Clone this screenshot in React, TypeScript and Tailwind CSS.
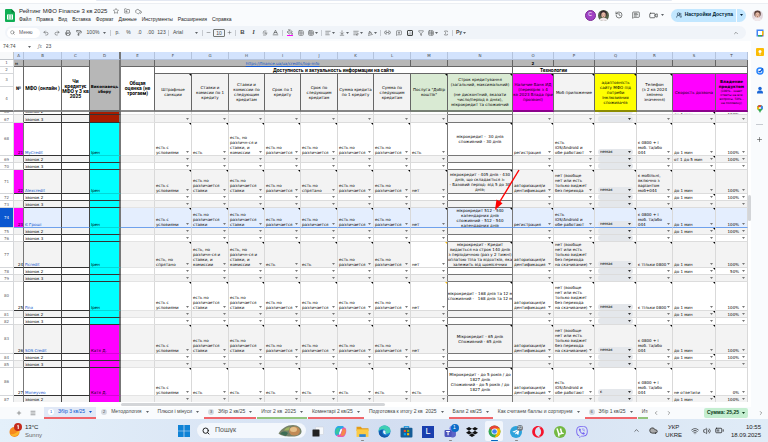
import type { ReactNode } from "react";
import clsx from "clsx";
import {
  AlignLeft,
  ArrowDownToLine,
  Baseline,
  BatteryMedium,
  ChartNoAxesColumn,
  ChevronLeft,
  ChevronRight,
  ChevronUp,
  Cloud,
  CloudCheck,
  Filter,
  FolderInput,
  Grid2x2,
  History,
  Link2,
  Menu,
  MessageSquarePlus,
  MessageSquareText,
  Minus,
  PaintBucket,
  PaintRoller,
  Plus,
  Printer,
  Redo2,
  Search,
  Sigma,
  Star,
  Strikethrough,
  TableCellsMerge,
  TableProperties,
  Undo2,
  UsersRound,
  Video,
  Volume2,
  Wifi,
  WrapText,
} from "lucide-react";
import { FaDropbox, FaOpera, FaTelegramPlane, FaViber } from "react-icons/fa";

type Row = {
  n: number;
  h: string;
  inner: string;
  gray?: boolean;
  selected?: boolean;
  main?: boolean;
  no?: string;
  noPink?: boolean;
  name: string;
  who?: string;
  whoBg: string;
  cells: string[];
};

const DIFF = "есть но\nразличается";
const DIFF_RATE = "есть но\nразличается\nставки";
const DIFF_FEE = "есть, но\nразличн-ся и\nставки, и\nкомиссии";
const COND = "есть с\nусловиями";
const AUTH = "авторизация/и\nдентификация";
const WIDGET = "нет (вообще\nнет или есть\nтолько виджет\nбез перехода\nна скачивание)";
const APPS = "есть\niOS/Android и\nобе работают";
const PHONE = "є 0800 + і\nмоб. та/або\n044";

// F..T, fifteen values for each call
const blank = (speed = "", share = "") => ["", "", "", "", "", "", "", "", "", "", "", "", "", speed, share];

const CYAN = "bg-[#00ffff]";
const PINK = "bg-[#ff00ff]";
const RED = "bg-[#a61c00]";

const sub = (n: number, call: 2 | 3, whoBg: string, gray: boolean, speed?: string, share?: string): Row => ({
  n,
  h: "h-[7px]",
  inner: "h-[6px]",
  gray,
  name: `звонок ${call}`,
  whoBg,
  cells: blank(speed, share),
});

const rows: Row[] = [
  { ...sub(66, 2, RED, false, "до 1 мин", "100%"), h: "h-[3px]", inner: "h-[2px]" },
  { ...sub(67, 3, RED, true), h: "h-[8px]", inner: "h-[7px]" },
  {
    n: 68, h: "h-[33px]", inner: "h-[32px]", main: true, no: "21", noPink: true, name: "MyCredit", who: "Ірен", whoBg: CYAN,
    cells: [COND, "есть", DIFF_FEE, DIFF, DIFF, DIFF, DIFF, "есть", "мікрокредит -  30 днів\nспоживний - 30 днів", "регистрация", APPS, "немає", PHONE, "до 1 мин", "100%"],
  },
  sub(69, 2, CYAN, true, "от 1 до 5 мин", "100%"),
  sub(70, 3, CYAN, false),
  {
    n: 71, h: "h-[24px]", inner: "h-[23px]", main: true, gray: true, no: "22", noPink: true, name: "Alexcredit", who: "Ірен", whoBg: CYAN,
    cells: [COND, DIFF_RATE, DIFF_RATE, DIFF, "есть но\nспрятано", DIFF, DIFF, "нет", "мікрокредит - 405 днів - 430\nднів, що складається з:\n- Базовий період: від 5 до 30\nднів;", AUTH, "нет (вообще\nнет или есть\nтолько виджет\nбез перехода", "немає", "є мобільні,\nвключно з\nваріантом\nмоб+044", "до 1 мин", "100%"],
  },
  sub(72, 2, CYAN, false, "до 1 мин", "100%"),
  sub(73, 3, CYAN, true),
  {
    n: 74, h: "h-[20px]", inner: "h-[19px]", main: true, selected: true, no: "23", noPink: true, name: "Є Гроші", who: "Ірен", whoBg: CYAN,
    cells: [COND, DIFF_RATE, DIFF_RATE, DIFF, DIFF, DIFF, DIFF, "нет", "мікрокредит 512 - 540\nкалендарних днів\nспоживний - 512 - 540\nкалендарних днів", "регистрация", APPS, "немає", PHONE, "до 1 мин", "100%"],
  },
  sub(75, 2, CYAN, true, "до 1 мин", "100%"),
  sub(76, 3, CYAN, false),
  {
    n: 77, h: "h-[26px]", inner: "h-[25px]", main: true, gray: true, no: "24", name: "Ficredit", who: "Ірен", whoBg: CYAN,
    cells: ["есть, но\nспрятано", DIFF_FEE, DIFF_FEE, "есть", "есть", DIFF, DIFF, "нет", "мікрокредит - Кредит\nвидається на строк 140 днів\nз періодичною (раз у 2 тижні)\nоплатою тіла та відсотків, яка\nзалежить від щомісячних", AUTH, WIDGET, "немає", "є тільки 0800", "до 1 мин", "100%"],
  },
  sub(78, 2, CYAN, false, "до 1 мин", "50%"),
  sub(79, 3, CYAN, true),
  {
    n: 80, h: "h-[29px]", inner: "h-[28px]", main: true, no: "25", name: "Finx", who: "Ірен", whoBg: CYAN,
    cells: [COND, DIFF_RATE, DIFF_RATE, DIFF, DIFF, DIFF, DIFF, "нет", "мікрокредит - 168 днів та 12 м\nспоживний -   168 днів та 12 м", AUTH, WIDGET, "немає", "є тільки 0800", "до 1 мин", "100%"],
  },
  sub(81, 2, CYAN, true, "до 1 мин", "100%"),
  sub(82, 3, CYAN, false),
  {
    n: 83, h: "h-[29px]", inner: "h-[28px]", main: true, gray: true, no: "26", name: "SOS Credit", who: "Катя Д.", whoBg: PINK,
    cells: [COND, DIFF_RATE, DIFF_RATE, DIFF, DIFF, DIFF, DIFF, "нет", "Мікрокредит - 65 днів\nСпоживний - 65 днів", AUTH, WIDGET, "немає", PHONE, "до 1 мин", "100%"],
  },
  sub(84, 2, PINK, false, "до 1 мин", "100%"),
  sub(85, 3, PINK, true),
  {
    n: 86, h: "h-[28px]", inner: "h-[27px]", main: true, no: "27", name: "Moneyveo", who: "Катя Д.", whoBg: PINK,
    cells: [COND, "есть", "есть", "есть", "есть", "есть", "есть", "есть", "Мікрокредит - до 5 років / до\n1827 днів\nСпоживний - до 5 років / до\n1827 днів", AUTH, APPS, "є", PHONE, "не ответили", "0%"],
  },
  sub(87, 2, PINK, true, "до 1 мин", "100%"),
];

const columns: [string, string][] = [
  ["A", "w-[10px]"], ["B", "w-[38px]"], ["C", "w-[28px]"], ["D", "w-[31px]"], ["E", "w-[34px]"],
  ["F", "w-[37px]"], ["G", "w-[37px]"], ["H", "w-[36px]"], ["I", "w-[36px]"], ["J", "w-[37px]"],
  ["K", "w-[36px]"], ["L", "w-[37px]"], ["M", "w-[37px]"], ["N", "w-[65px]"], ["O", "w-[41px]"],
  ["P", "w-[41px]"], ["Q", "w-[42px]"], ["R", "w-[36px]"], ["S", "w-[43px]"], ["T", "w-[32px]"],
];

const headings: { text: string; bg: string; small?: string }[] = [
  { text: "Штрафные\nсанкции", bg: "bg-[#f3f3f3]" },
  { text: "Ставки и\nкомисии по 1\nкредиту", bg: "bg-[#f3f3f3]" },
  { text: "Ставки и\nкомиссии по\nследующим\nкредитам", bg: "bg-[#f3f3f3]" },
  { text: "Срок по 1\nкредиту", bg: "bg-[#f3f3f3]" },
  { text: "Срок по\nследующим\nкредитам", bg: "bg-[#f3f3f3]" },
  { text: "Сумма кредита\nпо 1 кредиту", bg: "bg-[#f3f3f3]" },
  { text: "Сумма по\nследующим\nкредитам", bg: "bg-[#f3f3f3]" },
  { text: "Послуга \"Добір\nкоштів\"", bg: "bg-[#d9ead3]" },
  { text: "Строк кредитування\n(загальний, максимальний)\n\n(не дисконтний, вказати\nчисло/період в днях),\nмікрокредит та споживчий", bg: "bg-[#d9ead3]" },
  { text: "Наличие Банк ИД\n(перевіряє з 4\nкв 2023 Влада при\nпрозвоні)", bg: PINK },
  { text: "Моб приложение", bg: "bg-[#f3f3f3]" },
  { text: "адаптовність\nсайту МФО під\nпотреби\nінклюзивних\nспоживачів", bg: "bg-[#ffff00]" },
  { text: "Телефон\n(з 2 кв 2024\nзмінено\nзначення)", bg: "bg-[#f3f3f3]" },
  { text: "Скорость дозвона", bg: PINK },
  { text: "Владение\nпродуктом", bg: PINK, small: "(100% - знает\nответы на все\nвопросы, 50% -\nна половину)" },
];

function Caret({ className = "text-[#5f6368]" }: { className?: string }) {
  return (
    <svg viewBox="0 0 6 4" className={clsx("h-[2px] w-[3px] shrink-0", className)} fill="currentColor">
      <path d="M0 0h6L3 4z" />
    </svg>
  );
}

function Corner({ className = "text-black" }: { className?: string }) {
  return (
    <svg viewBox="0 0 4 4" className={clsx("absolute top-0 right-0 size-[2px]", className)} fill="currentColor">
      <path d="M0 0h4v4z" />
    </svg>
  );
}

function Tool({ label, children, wide }: { label: string; children: ReactNode; wide?: boolean }) {
  return (
    <button
      aria-label={label}
      className={clsx("flex h-full shrink-0 items-center justify-center", wide ? "w-[14px] gap-px" : "w-[11px]")}
    >
      {children}
      {wide && <Caret />}
    </button>
  );
}

function Divider() {
  return <span className="mx-px h-[6px] w-px shrink-0 bg-[#c7cbd1]" />;
}

function SheetsLogo() {
  return (
    <svg viewBox="0 0 20 26" className="h-[13px] w-[10px] shrink-0">
      <path d="M2 0h11l7 7v17a2 2 0 0 1-2 2H2a2 2 0 0 1-2-2V2a2 2 0 0 1 2-2z" fill="#0fae54" />
      <path d="M13 0l7 7h-7z" fill="#087a39" />
      <path d="M4 11h12v10H4zM6 13v2h3v-2zm5 0v2h3v-2zm-5 4v2h3v-2zm5 0v2h3v-2z" fill="#fff" fillRule="evenodd" />
    </svg>
  );
}

function Portrait({ hair, coat }: { hair: string; coat: string }) {
  return (
    <svg viewBox="0 0 20 20" className="size-[11px] shrink-0 rounded-full">
      <rect width="20" height="20" fill={coat} />
      <ellipse cx="10" cy="7" rx="6" ry="6" fill={hair} />
      <ellipse cx="10" cy="9" rx="4" ry="5" fill="#e5b9a4" />
      <path d="M3 20c0-5 3-6 7-6s7 1 7 6z" fill="#f0e8ea" />
      <path d="M8 9h1M11 9h1M9 12h2" stroke="#6d4037" />
    </svg>
  );
}

function AppHeader() {
  const menu = ["Файл", "Правка", "Вид", "Вставка", "Формат", "Данные", "Инструменты", "Расширения", "Справка"];
  return (
    <header className="flex h-[22px] shrink-0 items-center pr-[5px] pl-[5px] text-[#444746]">
      <SheetsLogo />
      <div className="ml-1 flex flex-col">
        <div className="flex h-2 items-center gap-[5px]">
          <h1 className="text-[6px] leading-[8px] text-[#1f1f1f]">Рейтинг МФО Finance 3 кв 2025</h1>
          <Star className="ml-px size-[6px]" />
          <FolderInput className="size-[6px]" />
          <CloudCheck className="size-[7px]" />
        </div>
        <nav className="flex h-2 items-center gap-[5px] text-[5px] leading-[8px] text-[#1f1f1f]">
          {menu.map((item) => (
            <button key={item}>{item}</button>
          ))}
        </nav>
      </div>
      <div className="ml-auto flex items-center">
        <span className="flex size-[11px] items-center justify-center rounded-full border border-[#7b2c94] bg-[#a142c4] text-[5px] text-white">С</span>
        <span className="ml-[2px] flex rounded-full">
          <Portrait hair="#33272c" coat="#55624a" />
        </span>
        <button aria-label="История версий" className="ml-[6px]"><History className="size-[8px]" /></button>
        <button aria-label="Комментарии" className="ml-[9px]"><MessageSquareText className="size-[8px]" /></button>
        <button aria-label="Видеовстреча" className="ml-[9px] flex items-center gap-[3px]">
          <Video className="size-[9px]" />
          <Caret />
        </button>
        <div className="ml-[7px] flex h-[13px] items-center overflow-hidden rounded-full bg-[#c2e7ff] text-[#001d35]">
          <button className="flex h-full items-center gap-[3px] pr-[3px] pl-[5px] text-[5px] font-bold">
            <UsersRound className="size-[6px]" />
            Настройки Доступа
          </button>
          <button aria-label="Параметры доступа" className="flex h-full w-[10px] items-center justify-center border-l border-[#f9fbfd]">
            <Caret className="text-[#001d35]" />
          </button>
        </div>
        <span className="ml-[6px] flex">
          <Portrait hair="#5b4038" coat="#e2d6dc" />
        </span>
      </div>
    </header>
  );
}

function Toolbar() {
  return (
    <div className="mx-[5px] flex h-[13px] shrink-0 items-center rounded-full bg-[#f0f4f9] pl-[2px] text-[5px] text-[#444746]">
      <label className="flex h-[10px] w-[33px] shrink-0 items-center gap-[4px] rounded-full bg-white pl-[3px]">
        <Search className="size-[5px] shrink-0" />
        <input aria-label="Меню" placeholder="Меню" className="w-full bg-transparent outline-none placeholder:text-[#5f6368]" />
      </label>
      <Tool label="Отменить"><Undo2 className="size-[6px]" /></Tool>
      <Tool label="Повторить"><Redo2 className="size-[6px]" /></Tool>
      <Tool label="Печать"><Printer className="size-[6px]" /></Tool>
      <Tool label="Копировать форматирование"><PaintRoller className="size-[6px]" /></Tool>
      <button className="flex w-[25px] shrink-0 items-center justify-center gap-[4px]">
        100% <Caret />
      </button>
      <Divider />
      <Tool label="Денежный формат">р.</Tool>
      <Tool label="Процентный формат">%</Tool>
      <Tool label="Меньше знаков">.0</Tool>
      <Tool label="Больше знаков">.00</Tool>
      <Tool label="Другие форматы">123</Tool>
      <Divider />
      <button className="flex w-[31px] shrink-0 items-center justify-between px-[3px]">
        Arial <Caret />
      </button>
      <Divider />
      <button aria-label="Уменьшить" className="w-[9px] shrink-0"><Minus className="mx-auto size-[5px]" /></button>
      <input aria-label="Размер шрифта" defaultValue="10" className="h-[8px] w-[12px] shrink-0 rounded-[1px] border border-[#747775] bg-transparent text-center leading-[6px]" />
      <button aria-label="Увеличить" className="w-[9px] shrink-0"><Plus className="mx-auto size-[5px]" /></button>
      <Divider />
      <Tool label="Полужирный"><b className="text-[6px]">B</b></Tool>
      <Tool label="Курсив"><i className="font-serif text-[6px] font-bold">I</i></Tool>
      <Tool label="Зачеркнутый"><Strikethrough className="size-[6px]" /></Tool>
      <Tool label="Цвет текста"><Baseline className="size-[7px]" /></Tool>
      <Divider />
      <Tool label="Цвет заливки">
        <span className="flex flex-col border-b border-[#ff00ff]"><PaintBucket className="size-[6px]" /></span>
      </Tool>
      <Tool label="Границы"><Grid2x2 className="size-[6px]" /></Tool>
      <Tool label="Объединить ячейки" wide><TableCellsMerge className="size-[6px]" /></Tool>
      <Divider />
      <Tool label="Горизонтальное выравнивание" wide><AlignLeft className="size-[6px]" /></Tool>
      <Tool label="Вертикальное выравнивание" wide><ArrowDownToLine className="size-[6px]" /></Tool>
      <Tool label="Перенос текста" wide><WrapText className="size-[6px]" /></Tool>
      <Tool label="Поворот текста" wide><Baseline className="size-[6px] -rotate-12" /></Tool>
      <Divider />
      <Tool label="Ссылка"><Link2 className="size-[7px]" /></Tool>
      <Tool label="Комментарий"><MessageSquarePlus className="size-[6px]" /></Tool>
      <Tool label="Диаграмма"><ChartNoAxesColumn className="size-[6px] rounded-[1px] border border-current" /></Tool>
      <Tool label="Фильтр"><Filter className="size-[6px]" /></Tool>
      <Tool label="Режим фильтрации" wide><TableProperties className="size-[6px]" /></Tool>
      <Tool label="Функции"><Sigma className="size-[6px]" /></Tool>
      <Divider />
      <Tool label="Способ ввода" wide><b>Ру</b></Tool>
      <button aria-label="Скрыть меню" className="mr-[7px] ml-auto"><ChevronUp className="size-[6px]" /></button>
    </div>
  );
}

function FormulaBar() {
  return (
    <div className="mt-[2px] flex h-[11px] shrink-0 items-center bg-white text-[5px] text-[#444746]">
      <button className="flex w-[33px] items-center justify-between pr-[2px] pl-[3px]">
        74:74 <Caret />
      </button>
      <label className="flex flex-1 items-center pl-[5px]">
        <i className="font-serif text-[#80868b]">fx</i>
        <input aria-label="Формула" defaultValue="23" className="ml-[4px] flex-1 bg-transparent outline-none" />
      </label>
    </div>
  );
}

function RowHead({ children, selected, className }: { children: ReactNode; selected?: boolean; className?: string }) {
  return (
    <th
      scope="row"
      className={clsx(
        "border-r border-b border-[#d5d7da] p-0 text-center leading-[4px] font-normal",
        selected ? "bg-[#0b57d0] text-white" : "bg-white text-[#5f6368]",
        className
      )}
    >
      {children}
    </th>
  );
}

function SheetHead() {
  const gray = "border-r border-b border-[#666] bg-[#b7b7b7] p-0";
  const bold = "font-[Roboto,Arial,sans-serif] text-[5px] font-bold";
  const tall = clsx("border-r border-b-2 border-r-[#666] border-b-black/45 bg-white p-0 text-center align-middle whitespace-pre", bold);
  const merged = clsx("border-r border-b border-[#666] bg-white p-0 text-center", bold);
  return (
    <thead>
      <tr className="h-[8px] bg-[#d3e3fd] leading-[4px] text-[#444746]">
        <th className="border-r border-b border-[#c0c4c9] bg-[#f8f9fa] p-0" />
        {columns.map(([letter]) => (
          <th
            key={letter}
            scope="col"
            className={clsx(
              "border-b border-[#b4c3dc] p-0 text-center font-medium",
              letter === "D" ? "border-r-2 border-r-[#777]" : "border-r"
            )}
          >
            {letter}
          </th>
        ))}
      </tr>
      <tr className="h-[7px] leading-[5px]">
        <RowHead>1</RowHead>
        <td className={gray}><div className="pl-px">м</div></td>
        <td className={gray} />
        <td className={gray} />
        <td className="border-r-2 border-r-[#777] bg-[#b7b7b7] p-0" />
        <td className={gray} />
        <td colSpan={7} className={clsx(gray, "text-center")}>
          <a href="https://finance.ua/ua/credits/top-mfo" className="text-[#1155cc] underline">
            https://finance.ua/ua/credits/top-mfo
          </a>
        </td>
        <td className={gray} />
        <td className={gray} />
        <td className={clsx(gray, "text-center font-bold")}>2</td>
        <td className={gray} />
        <td className={gray} />
        <td className={gray} />
        <td className={gray} />
        <td className={gray} />
      </tr>
      <tr className="h-[7px] leading-[5px]">
        <RowHead>2</RowHead>
        <th rowSpan={3} className={tall}>№</th>
        <th rowSpan={3} className={tall}>МФО (онлайн )</th>
        <th rowSpan={3} className={tall}>{"Чи\nкредитує\nМФО у 3 кв\n2025"}</th>
        <th rowSpan={3} className="border-r-2 border-b-2 border-r-[#777] border-b-black/45 bg-[#b7b7b7] p-0 text-center font-bold whitespace-pre">
          {"Виконавець\nзбору"}
        </th>
        <th rowSpan={3} className={tall}>{"Общая\nоценка (не\nтрогаем)"}</th>
        <th colSpan={9} className={merged}>Доступность и актуальность информации на сайте</th>
        <th colSpan={2} className={merged}>Технологии</th>
        <th className={merged} />
        <th colSpan={3} className={merged} />
      </tr>
      <tr className="h-[13px] leading-[5px]">
        <RowHead>3</RowHead>
        {headings.map((item, i) => (
          <th
            key={item.text}
            rowSpan={2}
            scope="col"
            className={clsx(
              "relative border-r border-b-2 border-r-[#666] border-b-black/45 p-0 text-center align-middle whitespace-pre",
              item.small ? "font-bold" : "font-medium",
              item.bg
            )}
          >
            {item.text}
            {item.small && <span className="block text-[3px] leading-[4px] font-medium">{item.small}</span>}
            {(i === 0 || i > 6) && i < 13 && <Corner />}
          </th>
        ))}
      </tr>
      <tr className="h-[25px]">
        <RowHead className="border-b-2 border-b-[#777]">4</RowHead>
      </tr>
    </thead>
  );
}

function PointerArrow() {
  return (
    <svg viewBox="0 0 26 41" className="pointer-events-none absolute -top-[39px] left-[46px] z-10 h-[41px] w-[26px]">
      <path d="M25 1L5 34" stroke="#f00" strokeWidth="1.4" />
      <path d="M1 41l1.500-10.500 6 3.700z" fill="#f00" />
    </svg>
  );
}

function ValueCell({ row, index }: { row: Row; index: number }) {
  const value = row.cells[index];
  const col = columns[index + 5][0];
  const yellow = (row.n === 77 || row.n === 80) && col === "M";
  const corner = yellow ? "text-[#fbbc04]" : "text-black";
  const hasCorner = (row.main && col !== "T") || (col === "S" && value !== "");
  const line = row.selected ? "border-b-[#6fa1ec]" : col === "N" ? "border-b-[#777]" : "border-b-[#dcdcdc]";
  const side = col === "N" || col === "M" ? "border-r-[#777]" : "border-r-[#d9d9d9]";

  return (
    <td className={clsx("relative border-r border-b p-0", line, side, row.n === 77 && col === "M" && "bg-white")}>
      {hasCorner && <Corner className={corner} />}
      {col === "N" ? (
        <div className={clsx("flex items-center justify-center overflow-hidden", row.inner)}>
          <p className="max-h-full text-center whitespace-pre">{value}</p>
        </div>
      ) : col === "Q" ? (
        <div className={clsx("flex items-end overflow-hidden px-[3px]", row.inner)}>
          <label className="flex h-[6px] w-full items-center justify-between rounded-full bg-[#e4e7eb] px-[2px]">
            <select aria-label={`Адаптивность, строка ${row.n}`} defaultValue={value} className="h-[6px] flex-1 appearance-none bg-transparent leading-[6px]">
              <option value={value}>{value}</option>
              <option value="інше">інше</option>
            </select>
            <Caret className="text-[#333]" />
          </label>
        </div>
      ) : (
        <div className={clsx("flex items-end justify-between overflow-hidden pr-[2px] pl-px", row.inner)}>
          <p className={clsx("max-h-full min-w-0 flex-1 whitespace-pre", col === "T" && "pr-[3px] text-right")}>{value}</p>
          <button aria-label={`Список ${col}${row.n}`} className="mb-[2px] flex shrink-0">
            <Caret className="text-[#777]" />
          </button>
        </div>
      )}
      {row.selected && col === "N" && <PointerArrow />}
    </td>
  );
}

function SheetRow({ row }: { row: Row }) {
  const line = row.selected ? "border-b-[#6fa1ec]" : "border-b-[#333]";
  return (
    <tr
      className={clsx(row.h, "leading-[5px]", row.selected ? "bg-[#e4eefe]" : row.gray ? "bg-[#f3f3f3]" : "bg-white")}
    >
      <RowHead selected={row.selected}>
        <div className={clsx("flex justify-center overflow-hidden", row.main ? "items-center" : "items-end", row.inner)}>{row.n}</div>
      </RowHead>
      <td className={clsx("border-r border-b border-r-[#777] p-0", row.main ? line : "border-b-[#dcdcdc]", row.noPink && "bg-[#ff00ff]")}>
        <div className={clsx("flex items-end justify-end overflow-hidden", row.inner)}>{row.no}</div>
      </td>
      <td className={clsx("border-r border-b border-r-[#444] p-0", line)}>
        <div className={clsx("flex items-end overflow-hidden pl-px whitespace-pre", row.inner)}>
          {row.main ? <a href="#site" className="text-[#1155cc] underline">{row.name}</a> : row.name}
        </div>
      </td>
      <td className={clsx("border-r border-b border-r-[#444] p-0", line)} />
      <td className={clsx("border-r-2 border-b border-r-[#777] p-0", row.main ? "border-b-black/15" : line, row.whoBg)}>
        <div className={clsx("flex items-end overflow-hidden pl-px", row.inner)}>{row.who}</div>
      </td>
      <td className={clsx("border-r border-b border-r-[#d9d9d9] p-0", row.selected ? line : "border-b-[#e4e4e4]")} />
      {row.cells.map((_, i) => (
        <ValueCell key={i} row={row} index={i} />
      ))}
    </tr>
  );
}

function Sheet() {
  return (
    <div className="flex min-h-0 flex-1 flex-col bg-white">
      <div className="flex min-h-0 flex-1">
        <div className="min-w-0 flex-1 overflow-hidden">
          <table className="w-full table-fixed border-separate border-spacing-0 font-['DejaVu_Sans',Arial,sans-serif] text-[4px] text-black">
            <colgroup>
              <col className="w-[14px]" />
              {columns.map(([letter, width]) => (
                <col key={letter} className={width} />
              ))}
            </colgroup>
            <SheetHead />
            <tbody>
              {rows.map((row) => (
                <SheetRow key={row.n} row={row} />
              ))}
            </tbody>
          </table>
        </div>
        <div className="flex w-[3px] shrink-0 flex-col pt-[143px]">
          <span className="h-[26px] rounded-full bg-[#d3d5d8]" />
        </div>
      </div>
      <div className="flex h-[5px] shrink-0 items-center pl-[121px]">
        <span className="h-[3px] w-[264px] rounded-full bg-[#d3d5d8]" />
      </div>
    </div>
  );
}

const tabs: { text: string; badge?: string; line?: string; active?: boolean }[] = [
  { text: "Збір 3 кв/25", badge: "1", line: "border-[#f0656b]", active: true },
  { text: "Методология", badge: "2" },
  { text: "Плюси і мінуси" },
  { text: "Збір 2 кв/25", badge: "3", line: "border-[#f0656b]" },
  { text: "Итог 2 кв  2025", line: "border-[#93c47d]" },
  { text: "Коментарі 2 кв/25", line: "border-[#f0656b]" },
  { text: "Подготовка к итогу 2 кв  2025" },
  { text: "Бали 2 кв/25", line: "border-[#f0656b]" },
  { text: "Как считаем баллы и сортируем" },
  { text: "Збір 1 кв/25", badge: "6", line: "border-[#f0656b]" },
  { text: "Итог 1 кв 2025", line: "border-[#93c47d]" },
];

function SheetTabs() {
  return (
    <footer className="flex h-[12px] shrink-0 items-center bg-[#f9fbfd] text-[5px] text-[#444746]">
      <button aria-label="Добавить лист" className="ml-[16px]"><Plus className="size-[6px]" /></button>
      <button aria-label="Все листы" className="mr-[8px] ml-[8px]"><Menu className="size-[6px]" /></button>
      <div className="flex h-full w-[604px] min-w-0 gap-px overflow-hidden">
        {tabs.map((tab) => (
          <button
            key={tab.text}
            className={clsx(
              "flex h-full shrink-0 items-center gap-[4px] border-b-2 px-[4px] font-medium whitespace-pre",
              tab.line ?? "border-transparent",
              tab.active && "bg-[#e1e9f7] font-bold text-[#0b57d0]"
            )}
          >
            {tab.badge && (
              <span className={clsx("flex size-[6px] items-center justify-center rounded-full text-[4px]", tab.active ? "bg-white" : "bg-[#d5dae2]")}>
                {tab.badge}
              </span>
            )}
            {tab.text}
            <Caret className={tab.active ? "text-[#0b57d0]" : undefined} />
          </button>
        ))}
      </div>
      <button aria-label="Назад" className="ml-[5px]"><ChevronLeft className="size-[6px]" /></button>
      <button aria-label="Вперед" className="ml-[7px]"><ChevronRight className="size-[6px]" /></button>
      <button className="mr-[8px] ml-auto flex h-[10px] items-center gap-[3px] rounded-[2px] bg-[#c4eed0] px-[3px] font-bold text-[#0a3818]">
        Сумма: 25,25
        <Caret className="text-[#0a3818]" />
      </button>
      <button aria-label="Боковая панель" className="mr-[4px] ml-[2px]"><ChevronRight className="size-[6px]" /></button>
    </footer>
  );
}

function SidePanel() {
  return (
    <aside className="flex w-[17px] shrink-0 flex-col items-center gap-[11px] pt-[3px] text-[#444746]">
      <button aria-label="Календарь">
        <svg viewBox="0 0 16 16" className="size-[8px]">
          <path d="M1 1h14v14H1z" fill="#4285f4" />
          <path d="M12 4h3v8h-3z" fill="#fbbc04" />
          <path d="M4 12h8v3H4z" fill="#34a853" />
          <path d="M4 4h8v8H4z" fill="#fff" />
          <path d="M12 15v-3h3z" fill="#ea4335" />
        </svg>
      </button>
      <button aria-label="Keep">
        <svg viewBox="0 0 16 16" className="size-[8px]">
          <rect width="16" height="16" rx="2" fill="#fbbc04" />
          <circle cx="8" cy="7" r="3" fill="#fff" />
          <path d="M6.500 11h3v2h-3z" fill="#fff" />
        </svg>
      </button>
      <button aria-label="Задачи">
        <svg viewBox="0 0 16 16" className="size-[8px]" fill="none">
          <circle cx="8" cy="8" r="6" stroke="#2684fc" strokeWidth="3" />
          <path d="M5 8l3 2 6-7" stroke="#0b57d0" strokeWidth="2.500" />
        </svg>
      </button>
      <button aria-label="Контакты">
        <svg viewBox="0 0 16 16" className="size-[8px]" fill="#1a66d6">
          <circle cx="8" cy="5" r="3.500" />
          <path d="M2 15v-2c0-3 3-4 6-4s6 1 6 4v2z" />
        </svg>
      </button>
      <button aria-label="Карты">
        <svg viewBox="0 0 16 16" className="size-[8px]">
          <path d="M8 0a6 6 0 0 0-6 6c0 4 5 5 6 10 1-5 6-6 6-10a6 6 0 0 0-6-6z" fill="#34a853" />
          <path d="M8 0a6 6 0 0 0-5 3l5 4 3-6z" fill="#ea4335" />
          <path d="M11 1L8 6l5 3 1-3a6 6 0 0 0-3-5z" fill="#4285f4" />
          <path d="M2 6l2 4 4-4-5-3z" fill="#fbbc04" />
          <circle cx="8" cy="6" r="2" fill="#fff" />
        </svg>
      </button>
      <span className="h-px w-[7px] bg-[#c7cbd1]" />
      <button aria-label="Дополнения"><Plus className="size-[7px]" /></button>
    </aside>
  );
}

const apps: { name: string; icon: ReactNode; running?: boolean; active?: boolean }[] = [
  {
    name: "Представление задач",
    icon: (
      <svg viewBox="0 0 24 24" className="size-[12px]">
        <rect x="7" y="2" width="16" height="15" rx="1" fill="#f7f9fc" stroke="#c9ced6" />
        <rect x="1" y="7" width="14" height="14" rx="1" fill="#222" />
      </svg>
    ),
  },
  {
    name: "Copilot",
    icon: (
      <svg viewBox="0 0 24 24" className="size-[13px]">
        <path d="M8 2h8c2 0 2 2 3 5h-6L9 19c-1 2-6 2-7-2C0 12 3 2 8 2z" fill="#2aa7e8" />
        <path d="M2 14c1-6 3-9 6-9h3L8 17c-3 1-5 0-6-3z" fill="#37c6a0" />
        <path d="M16 22H8c-2 0-2-2-3-4h6L15 6c1-2 6-2 7 1 2 5-1 15-6 15z" fill="#e85bb0" />
        <path d="M22 10c-1 6-3 10-6 10h-4l4-12c3-1 5 0 6 2z" fill="#f58a4b" />
        <path d="M12 8l-3 8h3l3-8z" fill="#fff" />
      </svg>
    ),
  },
  {
    name: "Проводник",
    running: true,
    icon: (
      <svg viewBox="0 0 24 24" className="size-[13px]">
        <path d="M1 3h8l2 3h12v5H1z" fill="#e29b18" />
        <path d="M1 8h22v14H1z" fill="#fccb45" />
        <path d="M6 17h12v5H6z" fill="#2b84d8" />
      </svg>
    ),
  },
  {
    name: "Edge",
    icon: (
      <svg viewBox="0 0 24 24" className="size-[13px]">
        <circle cx="12" cy="12" r="11" fill="#1479cf" />
        <path d="M1 12C1 4 7 1 12 1c7 0 11 5 11 9 0 4-3 6-7 6-3 0-2-1-2-3 0-3-2-5-5-5-4 0-7 2-8 4z" fill="#3fcfb4" />
        <path d="M9 9c-3 3-2 10 6 11 3 0 5-1 6-2-2 4-6 5-9 5C6 23 1 18 2 13c1-3 4-4 7-4z" fill="#1258a8" />
        <path d="M10 10c2-1 4 1 4 3-1 2 0 3 2 4-4 1-8-2-6-7z" fill="#e5f3fb" />
      </svg>
    ),
  },
  {
    name: "Microsoft Store",
    icon: (
      <svg viewBox="0 0 24 24" className="size-[13px]">
        <path d="M8 6V3h8v3" fill="none" stroke="#2b9fe0" strokeWidth="2" />
        <rect x="1" y="5" width="22" height="18" rx="2" fill="#155c96" />
        <path d="M7 9h4v4H7z" fill="#f25022" />
        <path d="M13 9h4v4h-4z" fill="#7fba00" />
        <path d="M7 15h4v4H7z" fill="#00a4ef" />
        <path d="M13 15h4v4h-4z" fill="#ffb900" />
      </svg>
    ),
  },
  {
    name: "L",
    icon: <span className="flex size-[12px] items-center justify-center bg-[#1a3fae] text-[9px] leading-[9px] text-white">L</span>,
  },
  {
    name: "Teams",
    running: true,
    icon: (
      <span className="relative flex">
        <svg viewBox="0 0 24 24" className="size-[13px]">
          <circle cx="14" cy="6" r="4" fill="#7b83eb" />
          <path d="M8 10h14v6a6 6 0 0 1-12 2z" fill="#5b64c7" />
          <rect x="1" y="9" width="13" height="13" rx="2" fill="#4b53bc" />
          <path d="M4 12h7M7.500 12v7" stroke="#fff" strokeWidth="2" />
        </svg>
        <span className="absolute -top-px -right-[2px] flex size-[8px] items-center justify-center rounded-full bg-[#0a6cc8] text-[5px] text-white">1</span>
      </span>
    ),
  },
  { name: "Dropbox", icon: <FaDropbox className="size-[12px] text-[#111]" /> },
  {
    name: "Chrome",
    active: true,
    icon: (
      <svg viewBox="0 0 24 24" className="size-[13px]">
        <circle cx="12" cy="12" r="11" fill="#34a853" />
        <path d="M12 12L2.500 6.500A11 11 0 0 1 21.500 6.500z" fill="#ea4335" />
        <path d="M12 6.500h9.500A11 11 0 0 1 12 23l4.800-8.300z" fill="#fbbc04" />
        <circle cx="12" cy="12" r="5.500" fill="#fff" />
        <circle cx="12" cy="12" r="4.300" fill="#4285f4" />
      </svg>
    ),
  },
  {
    name: "Telegram",
    running: true,
    icon: (
      <span className="relative flex size-[12px] items-center justify-center rounded-full bg-[#2da3dc]">
        <FaTelegramPlane className="size-[8px] text-white" />
        <span className="absolute -top-px -right-px flex size-[6px] items-center justify-center rounded-full bg-[#6c7884] text-[4px] text-white">22</span>
      </span>
    ),
  },
  { name: "Opera", icon: <FaOpera className="size-[12px] text-[#f5142c]" /> },
  {
    name: "uTorrent",
    icon: (
      <svg viewBox="0 0 24 24" className="size-[12px]" fill="none">
        <circle cx="12" cy="12" r="12" fill="#74b943" />
        <path d="M6 5l3 9c1 3 6 3 6-1l-2-8M15 13c1 2 3 2 4 1M9 15l1 6" stroke="#fff" strokeWidth="3" />
      </svg>
    ),
  },
  { name: "Viber", icon: <FaViber className="size-[12px] text-[#7360f2]" /> },
];

function Taskbar() {
  return (
    <div className="flex h-[23px] shrink-0 items-center bg-linear-to-r from-[#e4f0fa] via-[#d3def1] to-[#e0ecf7] text-[#222]">
      <div className="flex w-[173px] items-center gap-[3px] pl-[9px]">
        <svg viewBox="0 0 26 30" className="h-[15px] w-[13px]">
          <circle cx="11" cy="18" r="10" fill="#f6891f" />
          <path d="M2 22c5 2 12 0 18-8a10 10 0 0 1-18 8z" fill="#fbb62c" />
          <circle cx="18" cy="8" r="8" fill="#c42b1c" />
          <path d="M16.500 6l2-1.500V12" stroke="#fff" strokeWidth="2" fill="none" />
        </svg>
        <div className="text-[6px] leading-[8px]">
          <p>13°C</p>
          <p className="text-[#666]">Sunny</p>
        </div>
      </div>
      <button aria-label="Пуск" className="ml-[5px]">
        <svg viewBox="0 0 24 24" className="size-[12px]">
          <path d="M0 0h11.300v11.300H0zM12.700 0H24v11.300H12.700zM0 12.700h11.300V24H0zM12.700 12.700H24V24H12.700z" fill="#0f83d6" />
        </svg>
      </button>
      <label className="mr-px ml-[7px] flex h-[15px] w-[109px] items-center gap-[5px] rounded-full bg-[#f3f7fc] pl-[5px]">
        <Search className="size-[8px] shrink-0 text-[#222]" strokeWidth={3} />
        <input aria-label="Пошук" placeholder="Пошук" className="w-full min-w-0 bg-transparent text-[7px] outline-none placeholder:text-[#555]" />
        <svg viewBox="0 0 48 26" className="mr-[4px] h-[13px] w-[24px] shrink-0">
          <path d="M1 19C8 8 18 2 30 2c10 0 17 6 17 13s-8 10-18 10S8 25 1 19z" fill="#77836a" />
          <ellipse cx="33" cy="14" rx="11" ry="9" fill="#c18a56" />
          <ellipse cx="31" cy="11" rx="7" ry="5" fill="#e5c08a" />
          <path d="M4 20c5-6 10-6 16-2l-4 6z" fill="#3e6d55" />
          <path d="M12 13c4-6 8-7 12-6l-3 6z" fill="#9fb35e" />
        </svg>
      </label>
      {apps.map((app) => (
        <button
          key={app.name}
          aria-label={app.name}
          className="flex w-[22px] shrink-0 justify-center"
        >
          <span className={clsx("flex h-[20px] w-[18px] flex-col items-center justify-end gap-[2px] rounded-[2px]", app.active && "bg-[#f2f6fc]")}>
            {app.icon}
            <span className={clsx("h-px rounded-full", app.active ? "w-[7px] bg-[#0067c0]" : "w-[3px]", app.running && "bg-[#888]")} />
          </span>
        </button>
      ))}
      <div className="ml-auto flex items-center pr-[7px] text-[6px] leading-[8px]">
        <ChevronUp className="size-[7px]" />
        <Cloud className="ml-[9px] size-[9px]" fill="#aaa" />
        <p className="ml-[7px] text-center">
          УКР
          <br />
          UKRE
        </p>
        <Wifi className="ml-[9px] size-[8px]" />
        <Volume2 className="ml-[4px] size-[8px]" />
        <BatteryMedium className="ml-[4px] size-[9px]" />
        <p className="ml-[7px] text-right">
          10:55
          <br />
          18.09.2025
        </p>
      </div>
    </div>
  );
}

export default function App() {
  return (
    <div className="flex h-screen flex-col overflow-hidden bg-[#f9fbfd] font-['Liberation_Sans',Arial,sans-serif]">
      <div className="flex h-[4px] shrink-0 justify-center border-b border-[#eceff3] bg-white">
        <span className="h-px w-3/4 rounded-b-full bg-[#e3e8f2]" />
      </div>
      <AppHeader />
      <div className="flex min-h-0 flex-1">
        <main className="flex min-w-0 flex-1 flex-col">
          <Toolbar />
          <FormulaBar />
          <Sheet />
        </main>
        <SidePanel />
      </div>
      <SheetTabs />
      <Taskbar />
    </div>
  );
}
